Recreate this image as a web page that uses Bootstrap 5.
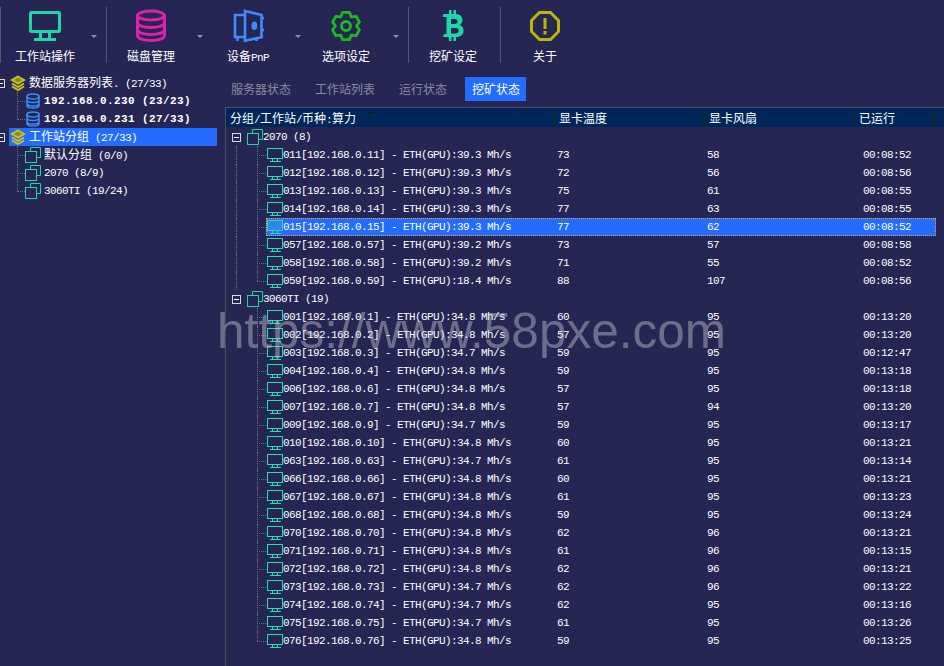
<!DOCTYPE html>
<html lang="zh">
  <head>
    <meta charset="utf-8" />
    <title>挖矿状态</title>
    <link href="https://cdn.jsdelivr.net/npm/bootstrap@5.3.3/dist/css/bootstrap.min.css" rel="stylesheet" />
    <style>
      html, body { height: 666px; overflow: hidden; }
      body {
        background: #262655; color: #fff; position: relative;
        font-family: "Liberation Mono", monospace; font-size: 11px; letter-spacing: -0.6px; line-height: 18px;
      }
      .cjk { font-family: "Noto Sans CJK SC", sans-serif; font-size: 12px; letter-spacing: 0; }
      .tool-bar { height: 77px; }
      .tool-sep { width: 1px; height: 56px; margin-top: 7px; background: #55556b; flex: none; }
      .tool-item { flex: none; height: 70px; }
      .tool-main { width: 88px; padding-top: 9px; }
      .tool-main svg { display: block; height: 34px; width: 34px; }
      .tool-label { margin-top: 5px; line-height: 16px; white-space: nowrap; }
      .tool-caret { width: 0; height: 0; border: 3px solid transparent; border-top: 3px solid #8f8fa8; border-bottom: 0; margin-top: 35px; flex: none; }
      .caret-a { margin-left: 2px; margin-right: 9px; }
      .caret-b { margin-left: 2px; margin-right: 1px; }
      .caret-c { margin-left: 3px; margin-right: 1px; }
      .caret-d { margin-left: 3px; margin-right: 9px; }
      .side-pane { width: 225px; flex: none; margin-top: -3px; }
      .side-row { height: 18px; white-space: nowrap; }
      .exp-box { width: 9px; height: 9px; border: 1px solid #d8d8e0; flex: none; position: relative; }
      .exp-box::after { content: ""; position: absolute; left: 1px; right: 1px; top: 3px; height: 1px; background: #fff; }
      .side-sel { background: #246cff; }
      .side-strong { font-weight: 700; letter-spacing: 0.4px; }
      .tab-row { height: 30px; padding-left: 6px; gap: 24px; }
      .tab-row .nav-link { color: #8a8aa0; padding: 3px 0; line-height: 18px; }
      .tab-row .nav-link.active { background: #246cff; color: #fff; padding: 3px 6px 3px 7px; margin-left: -6px; border-radius: 0; }
      .main-pane { width: 719px; flex: none; }
      .grid-pane { border-left: 1px solid #4c4c60; border-top: 1px solid #4c4c60; height: 559px; }
      .head-row { height: 19px; background: #00265a; }
      .head-cell { border-right: 2px solid #0c2a2c; line-height: 20px; padding-left: 4px; flex: none; }
      .w-name { width: 329px; }
      .w-temp { width: 150px; }
      .w-fan { width: 150px; }
      .w-time { width: 80px; }
      .sort-mark { margin-left: 12px; vertical-align: -1px; }
      #gridBody { padding-top: 1px; }
      .grid-row { height: 18px; white-space: nowrap; }
      .gut { width: 40px; flex: none; height: 18px; position: relative; }
      .line-v { position: absolute; top: 0; bottom: 0; border-left: 1px dotted #6c6c88; }
      .line-h { position: absolute; top: 9px; left: 31px; width: 9px; border-top: 1px dotted #6c6c88; }
      .row-body { width: 670px; flex: none; height: 18px; border: 1px solid transparent; }
      .row-on { background: #246cff; border: 1px dotted #e8a040; }
      .c-name { width: 288px; flex: none; }
      .c-temp { width: 150px; flex: none; padding-left: 2px; }
      .c-fan { width: 158px; flex: none; padding-left: 2px; }
      .row-ico { display: block; width: 16px; height: 16px; flex: none; }
      .stamp {
        position: absolute; left: 217px; top: 298px; font-family: "Liberation Sans", sans-serif;
        font-size: 49.5px; line-height: 66px; letter-spacing: 0; color: rgba(205, 205, 215, 0.42); pointer-events: none; white-space: nowrap;
      }
    </style>
  </head>
  <body>
    <div class="tool-bar d-flex">
      <div class="tool-sep"></div>
      <div class="tool-item d-flex">
        <div class="tool-main d-flex flex-column align-items-center">
          <svg viewBox="0 0 34 34" fill="none" stroke="#1fd6a8" stroke-width="3"><rect x="2.500" y="3.500" width="29" height="19" rx="1" /><path d="M12.500 24v6M21.500 24v6M6 30.500h22" /></svg>
          <div class="tool-label cjk">工作站操作</div>
        </div>
        <div class="tool-caret caret-a"></div>
      </div>
      <div class="tool-sep"></div>
      <div class="tool-item d-flex">
        <div class="tool-main d-flex flex-column align-items-center">
          <svg viewBox="0 0 34 34" fill="none" stroke="#e020a8" stroke-width="3"><ellipse cx="17" cy="6.500" rx="13.500" ry="4.500" /><path d="M3.500 6.500v20c0 3 6 5 13.500 5s13.500-2 13.500-5v-20M3.500 13.500c0 3 6 5 13.500 5s13.500-2 13.500-5M3.500 20.500c0 3 6 5 13.500 5s13.500-2 13.500-5" /></svg>
          <div class="tool-label cjk">磁盘管理</div>
        </div>
        <div class="tool-caret caret-b"></div>
      </div>
      <div class="tool-item d-flex">
        <div class="tool-main d-flex flex-column align-items-center">
          <svg viewBox="0 0 34 34" fill="none" stroke="#3d8bfd" stroke-width="2.600"><path d="M14 6H4v22h10M14 2l16.500 4v22.300L14 31.700zM30.500 9h2.500M30.500 21h2.500M6.500 28v4M25.500 29v3" /><ellipse cx="23.300" cy="16.700" rx="1.600" ry="3" fill="#3d8bfd" /></svg>
          <div class="tool-label"><span class="cjk">设备</span>PnP</div>
        </div>
        <div class="tool-caret caret-c"></div>
      </div>
      <div class="tool-item d-flex">
        <div class="tool-main d-flex flex-column align-items-center">
          <svg viewBox="0 0 34 34" fill="none" stroke="#1db81d" stroke-width="2.800" stroke-linejoin="round"><path d="M13.600 3.400L20.400 3.400L22.250 7.900L27.070 7.270L30.460 13.140L27.500 17L30.460 20.860L27.070 26.730L22.250 26.100L20.400 30.600L13.600 30.600L11.750 26.100L6.930 26.730L3.540 20.860L6.500 17L3.540 13.140L6.930 7.270L11.750 7.900z" /><circle cx="17" cy="17" r="4.500" /></svg>
          <div class="tool-label cjk">选项设定</div>
        </div>
        <div class="tool-caret caret-d"></div>
      </div>
      <div class="tool-sep"></div>
      <div class="tool-item d-flex" style="width: 91px">
        <div class="tool-main d-flex flex-column align-items-center">
          <svg viewBox="0 0 34 34" fill="#1fd6a8"><path fill-rule="evenodd" d="M7 5h6V1h2.500v4h2V1h2.500v4c4 .3 6.500 2.500 6.500 6 0 2-1 3.800-3 4.800 2.500 1 4 3 4 5.700 0 4-2.500 6.500-7.500 6.500v4h-2.500v-4h-2v4H13v-4H7l1-3h2.500V8H7zM15 10v5h4c1.500 0 2.500-1 2.500-2.500S20.500 10 19 10zM15 19v5.500h5c1.700 0 2.700-1.100 2.700-2.750S21.700 19 20 19z" /></svg>
          <div class="tool-label cjk">挖矿设定</div>
        </div>
      </div>
      <div class="tool-sep"></div>
      <div class="tool-item d-flex">
        <div class="tool-main d-flex flex-column align-items-center">
          <svg viewBox="0 0 34 34" fill="none" stroke="#bdb600" stroke-width="3"><path d="M11.500 3.500h11l8 8v11l-8 8h-11l-8-8v-11z" /><path d="M17 9v11M17 22v3.500" /></svg>
          <div class="tool-label cjk">关于</div>
        </div>
      </div>
    </div>

    <div class="d-flex">
      <div class="side-pane" id="sideTree"></div>
      <div class="main-pane">
        <ul class="nav tab-row">
          <li class="nav-item"><a class="nav-link cjk" href="#">服务器状态</a></li>
          <li class="nav-item"><a class="nav-link cjk" href="#">工作站列表</a></li>
          <li class="nav-item"><a class="nav-link cjk" href="#">运行状态</a></li>
          <li class="nav-item"><a class="nav-link active cjk" href="#">挖矿状态</a></li>
        </ul>
        <div class="grid-pane">
          <div class="head-row d-flex">
            <div class="head-cell w-name"><span class="cjk">分组</span>/<span class="cjk">工作站</span>/<span class="cjk">币种</span>:<span class="cjk">算力</span><svg class="sort-mark" width="12" height="12" fill="none" stroke="#0c1c20"><path d="M0 .5h11M.5 .5l5 10" /></svg></div>
            <div class="head-cell w-temp cjk">显卡温度</div>
            <div class="head-cell w-fan cjk">显卡风扇</div>
            <div class="head-cell w-time cjk">已运行</div>
          </div>
          <div id="gridBody"></div>
        </div>
      </div>
    </div>

    <div class="stamp">https://www.58pxe.com</div>

    <script>
      const monitorIcon = function (on) {
        const fill = on ? "#2f86e8" : "none";
        return `<svg class="row-ico" viewBox="0 0 16 16" fill="${fill}" stroke="#1fe0b0" stroke-width="1.200" shape-rendering="crispEdges"><rect x="0.5" y="1.5" width="15" height="10" /><path d="M5.500 12v3M10.500 12v3M3 14.500h11" fill="none" /></svg>`;
      };
      const groupIcon = `<svg class="row-ico" viewBox="0 0 16 16" fill="none" stroke="#1fd6a8"><path d="M5.500 4.500v-4h10v10h-4" /><rect x="0.500" y="4.500" width="11" height="11" /></svg>`;
      const layerIcon = `<svg class="row-ico" viewBox="0 0 16 16" fill="none" stroke="#c8c020" stroke-width="2"><path d="M8 1.500l6 3.500-6 3.500L2 5z" fill="#8a8a10" /><path d="M2 8.500l6 3.500 6-3.500M2 11.500l6 3.500 6-3.500" /></svg>`;
      const dbIcon = `<svg class="row-ico" viewBox="0 0 16 16" fill="none" stroke="#3d8bfd" stroke-width="1.500"><ellipse cx="8" cy="3.500" rx="6" ry="2.500" /><path d="M2 3.500v9c0 1.500 2.700 2.500 6 2.500s6-1 6-2.500v-9M2 7c0 1.500 2.700 2.500 6 2.500S14 8.500 14 7M2 10.500c0 1.500 2.700 2.500 6 2.500s6-1 6-2.500" /></svg>`;

      // wrap the Chinese runs so they get the wider font
      function cjkWrap(text) {
        return text.replace(/[\u4e00-\u9fff]+/g, (m) => `<span class="cjk">${m}</span>`);
      }

      const sideRows = [
        { indent: 0, box: true, icon: layerIcon, text: "数据服务器列表. (27/33)" },
        { indent: 1, icon: dbIcon, text: "192.168.0.230 (23/23)", bold: true },
        { indent: 1, icon: dbIcon, text: "192.168.0.231 (27/33)", bold: true, last: true },
        { indent: 0, box: true, icon: layerIcon, text: "工作站分组 (27/33)", sel: true },
        { indent: 1, icon: groupIcon, text: "默认分组 (0/0)" },
        { indent: 1, icon: groupIcon, text: "2070 (8/9)" },
        { indent: 1, icon: groupIcon, text: "3060TI (19/24)", last: true },
      ];

      const sideTree = document.getElementById("sideTree");
      sideRows.forEach(function (r) {
        const row = document.createElement("div");
        row.className = "side-row d-flex align-items-center position-relative";
        let inner;
        if (r.indent === 0) {
          inner = `<span class="exp-box" style="margin-left:-4px"></span><div class="d-flex align-items-center ${r.sel ? "side-sel" : ""}" style="margin-left:4px;width:208px;height:18px"><span style="margin-left:1px"></span>${r.icon}<span style="margin-left:3px">${cjkWrap(r.text)}</span></div>`;
        } else {
          inner = `<span class="line-v" style="left:17px;${r.last ? "bottom:9px" : ""}"></span><span style="position:absolute;left:17px;top:9px;width:8px;border-top:1px dotted #6c6c88"></span><span style="margin-left:25px"></span>${r.icon}<span class="${r.bold ? "side-strong" : ""}" style="margin-left:3px">${cjkWrap(r.text)}</span>`;
        }
        row.innerHTML = inner;
        sideTree.appendChild(row);
      });

      const groups = [
        {
          name: "2070 (8)",
          rows: [
            ["011", "192.168.0.11", "39.3", 73, 58, "00:08:52"],
            ["012", "192.168.0.12", "39.3", 72, 56, "00:08:56"],
            ["013", "192.168.0.13", "39.3", 75, 61, "00:08:55"],
            ["014", "192.168.0.14", "39.3", 77, 63, "00:08:55"],
            ["015", "192.168.0.15", "39.3", 77, 62, "00:08:52"],
            ["057", "192.168.0.57", "39.2", 73, 57, "00:08:58"],
            ["058", "192.168.0.58", "39.2", 71, 55, "00:08:52"],
            ["059", "192.168.0.59", "18.4", 88, 107, "00:08:56"],
          ],
        },
        {
          name: "3060TI (19)",
          rows: [
            ["001", "192.168.0.1", "34.8", 60, 95, "00:13:20"],
            ["002", "192.168.0.2", "34.8", 57, 95, "00:13:20"],
            ["003", "192.168.0.3", "34.7", 59, 95, "00:12:47"],
            ["004", "192.168.0.4", "34.8", 59, 95, "00:13:18"],
            ["006", "192.168.0.6", "34.8", 57, 95, "00:13:18"],
            ["007", "192.168.0.7", "34.8", 57, 94, "00:13:20"],
            ["009", "192.168.0.9", "34.7", 59, 95, "00:13:17"],
            ["010", "192.168.0.10", "34.8", 60, 95, "00:13:21"],
            ["063", "192.168.0.63", "34.7", 61, 95, "00:13:14"],
            ["066", "192.168.0.66", "34.8", 60, 95, "00:13:21"],
            ["067", "192.168.0.67", "34.8", 61, 95, "00:13:23"],
            ["068", "192.168.0.68", "34.8", 59, 95, "00:13:24"],
            ["070", "192.168.0.70", "34.8", 62, 96, "00:13:21"],
            ["071", "192.168.0.71", "34.8", 61, 96, "00:13:15"],
            ["072", "192.168.0.72", "34.8", 62, 96, "00:13:21"],
            ["073", "192.168.0.73", "34.7", 62, 96, "00:13:22"],
            ["074", "192.168.0.74", "34.7", 62, 95, "00:13:16"],
            ["075", "192.168.0.75", "34.7", 61, 95, "00:13:26"],
            ["076", "192.168.0.76", "34.8", 59, 95, "00:13:25"],
          ],
        },
      ];

      const gridBody = document.getElementById("gridBody");
      groups.forEach(function (g, gi) {
        const head = document.createElement("div");
        head.className = "grid-row d-flex align-items-center position-relative";
        head.innerHTML = `<span class="exp-box" style="margin-left:6px;margin-right:6px"></span>${groupIcon}<span>${g.name}</span>`;
        gridBody.appendChild(head);

        g.rows.forEach(function (r, i) {
          const isLast = i === g.rows.length - 1;
          const row = document.createElement("div");
          row.className = "grid-row d-flex";
          const on = r[0] === "015";
          row.innerHTML = `<div class="gut">
              ${gi === 0 ? '<span class="line-v" style="left:10px"></span>' : ""}
              <span class="line-v" style="left:31px;${isLast ? "bottom:9px" : ""}"></span>
              <span class="line-h"></span>
            </div>
            <div class="row-body d-flex align-items-center ${on ? "row-on" : ""}">
              <div class="c-name d-flex align-items-center">${monitorIcon(on)}<span>${r[0]}[${r[1]}] - ETH(GPU):${r[2]} Mh/s</span></div>
              <div class="c-temp">${r[3]}</div>
              <div class="c-fan">${r[4]}</div>
              <div>${r[5]}</div>
            </div>`;
          gridBody.appendChild(row);
        });
      });
    </script>
  </body>
</html>
